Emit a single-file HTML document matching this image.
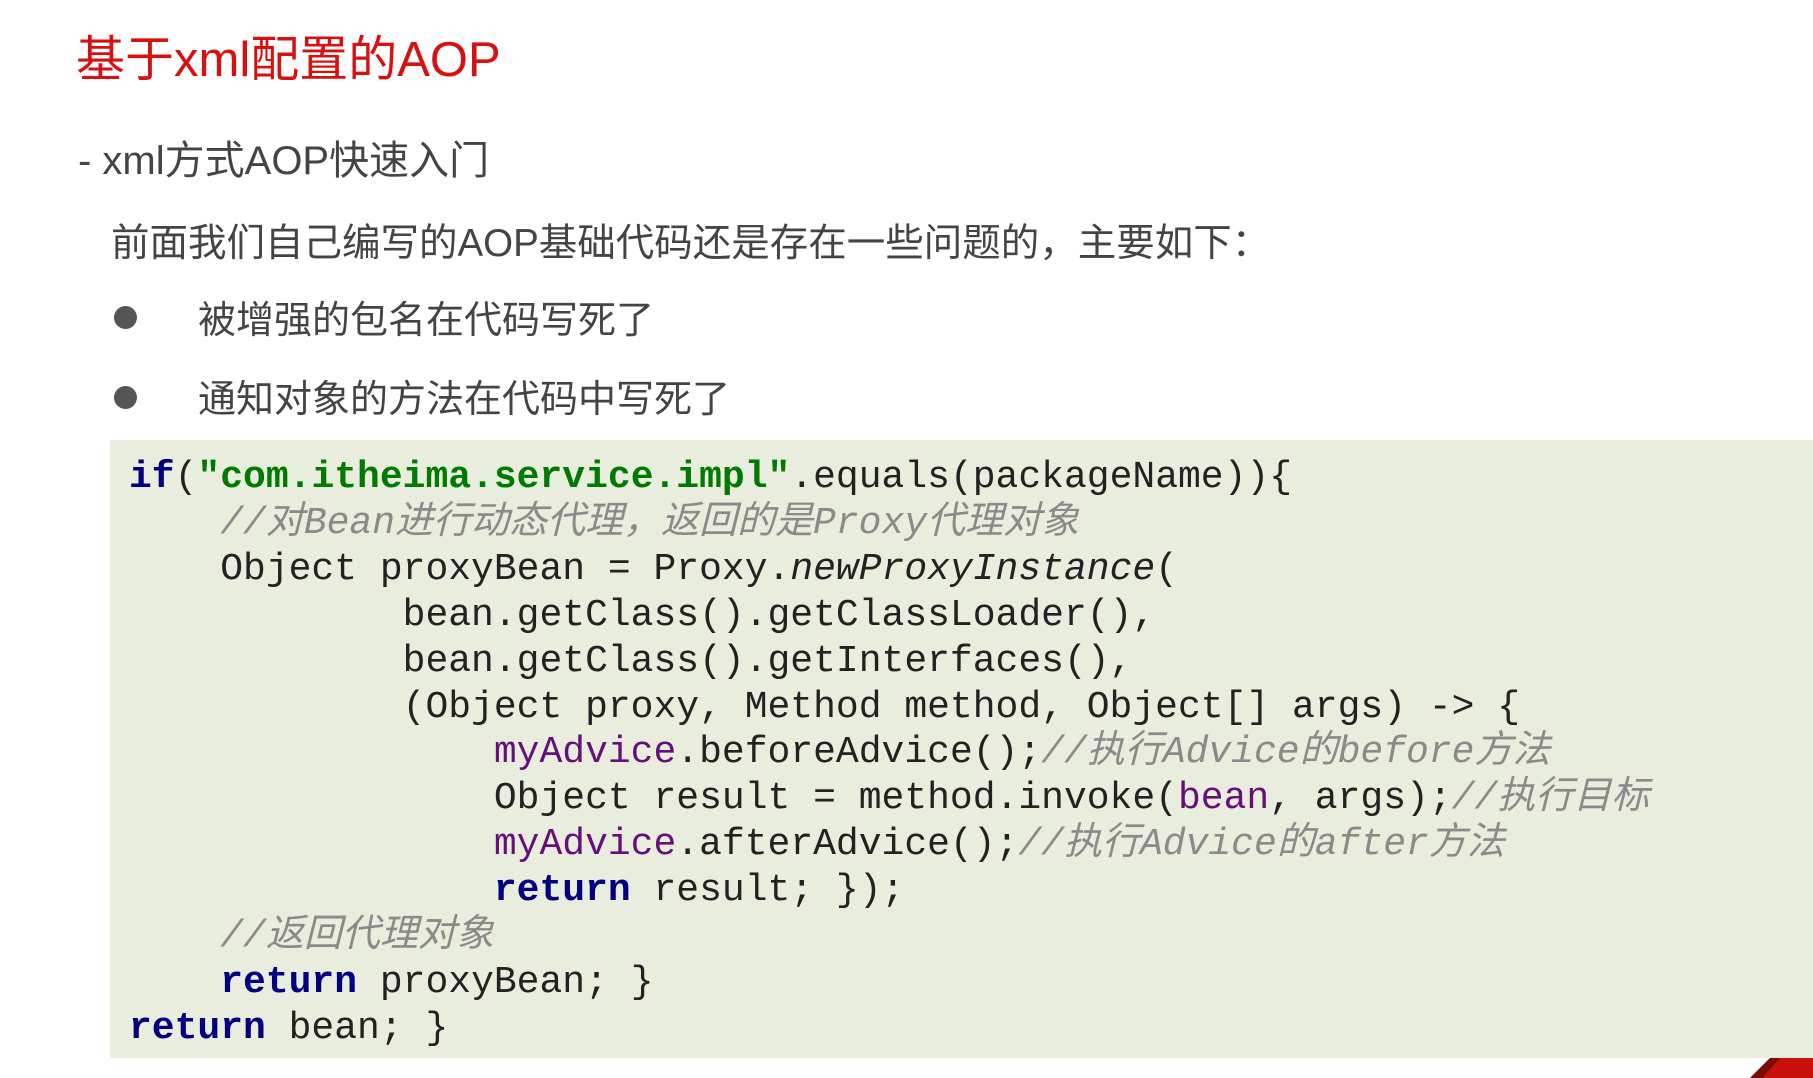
<!DOCTYPE html>
<html><head><meta charset="utf-8"><style>
html,body{margin:0;padding:0;width:1813px;height:1078px;overflow:hidden;background:#fff;}
body{position:relative;font-family:"Liberation Sans","Noto Sans CJK SC",sans-serif;}
.t{position:absolute;white-space:nowrap;}
#title{left:76px;top:20px;font-size:49px;color:#d8100f;}
#sub{left:78px;top:128px;font-size:40px;color:#444;}
#p{left:111px;top:212px;font-size:38.5px;color:#444;}
.b{left:198px;font-size:38px;color:#444;}
.dot{position:absolute;left:114px;width:23px;height:23px;border-radius:50%;background:#555;}
#code{position:absolute;left:110px;top:440px;width:1703px;height:618px;background:#e9edde;}
pre{margin:0;position:absolute;left:19px;top:15px;font-family:"Liberation Mono","Noto Sans CJK SC",monospace;font-size:38px;line-height:45.9px;color:#222;}
.k{color:#000080;font-weight:bold;}
.s{color:#007a00;font-weight:bold;}
.c{color:#8a8a8a;font-style:italic;}
.v{color:#660e7a;}
</style></head><body>
<div class="t" id="title">基于xml配置的AOP</div>
<div class="t" id="sub">- xml方式AOP快速入门</div>
<div class="t" id="p">前面我们自己编写的AOP基础代码还是存在一些问题的，主要如下：</div>
<div class="dot" style="top:306px"></div>
<div class="t b" style="top:289px">被增强的包名在代码写死了</div>
<div class="dot" style="top:386px"></div>
<div class="t b" style="top:368px">通知对象的方法在代码中写死了</div>
<div id="code"><pre><span class="k">if</span>(<span class="s">"com.itheima.service.impl"</span>.equals(packageName)){
    <span class="c">//对Bean进行动态代理，返回的是Proxy代理对象</span>
    Object proxyBean = Proxy.<i>newProxyInstance</i>(
            bean.getClass().getClassLoader(),
            bean.getClass().getInterfaces(),
            (Object proxy, Method method, Object[] args) -&gt; {
                <span class="v">myAdvice</span>.beforeAdvice();<span class="c">//执行Advice的before方法</span>
                Object result = method.invoke(<span class="v">bean</span>, args);<span class="c">//执行目标</span>
                <span class="v">myAdvice</span>.afterAdvice();<span class="c">//执行Advice的after方法</span>
                <span class="k">return</span> result; });
    <span class="c">//返回代理对象</span>
    <span class="k">return</span> proxyBean; }
<span class="k">return</span> bean; }</pre></div>
<svg style="position:absolute;left:1750px;top:1058px" width="63" height="20"><polygon points="20,0 63,0 63,20 0,20" fill="#c8100c"/><polygon points="20,0 30,0 12,20 0,20" fill="#7a0a08"/></svg>
</body></html>
